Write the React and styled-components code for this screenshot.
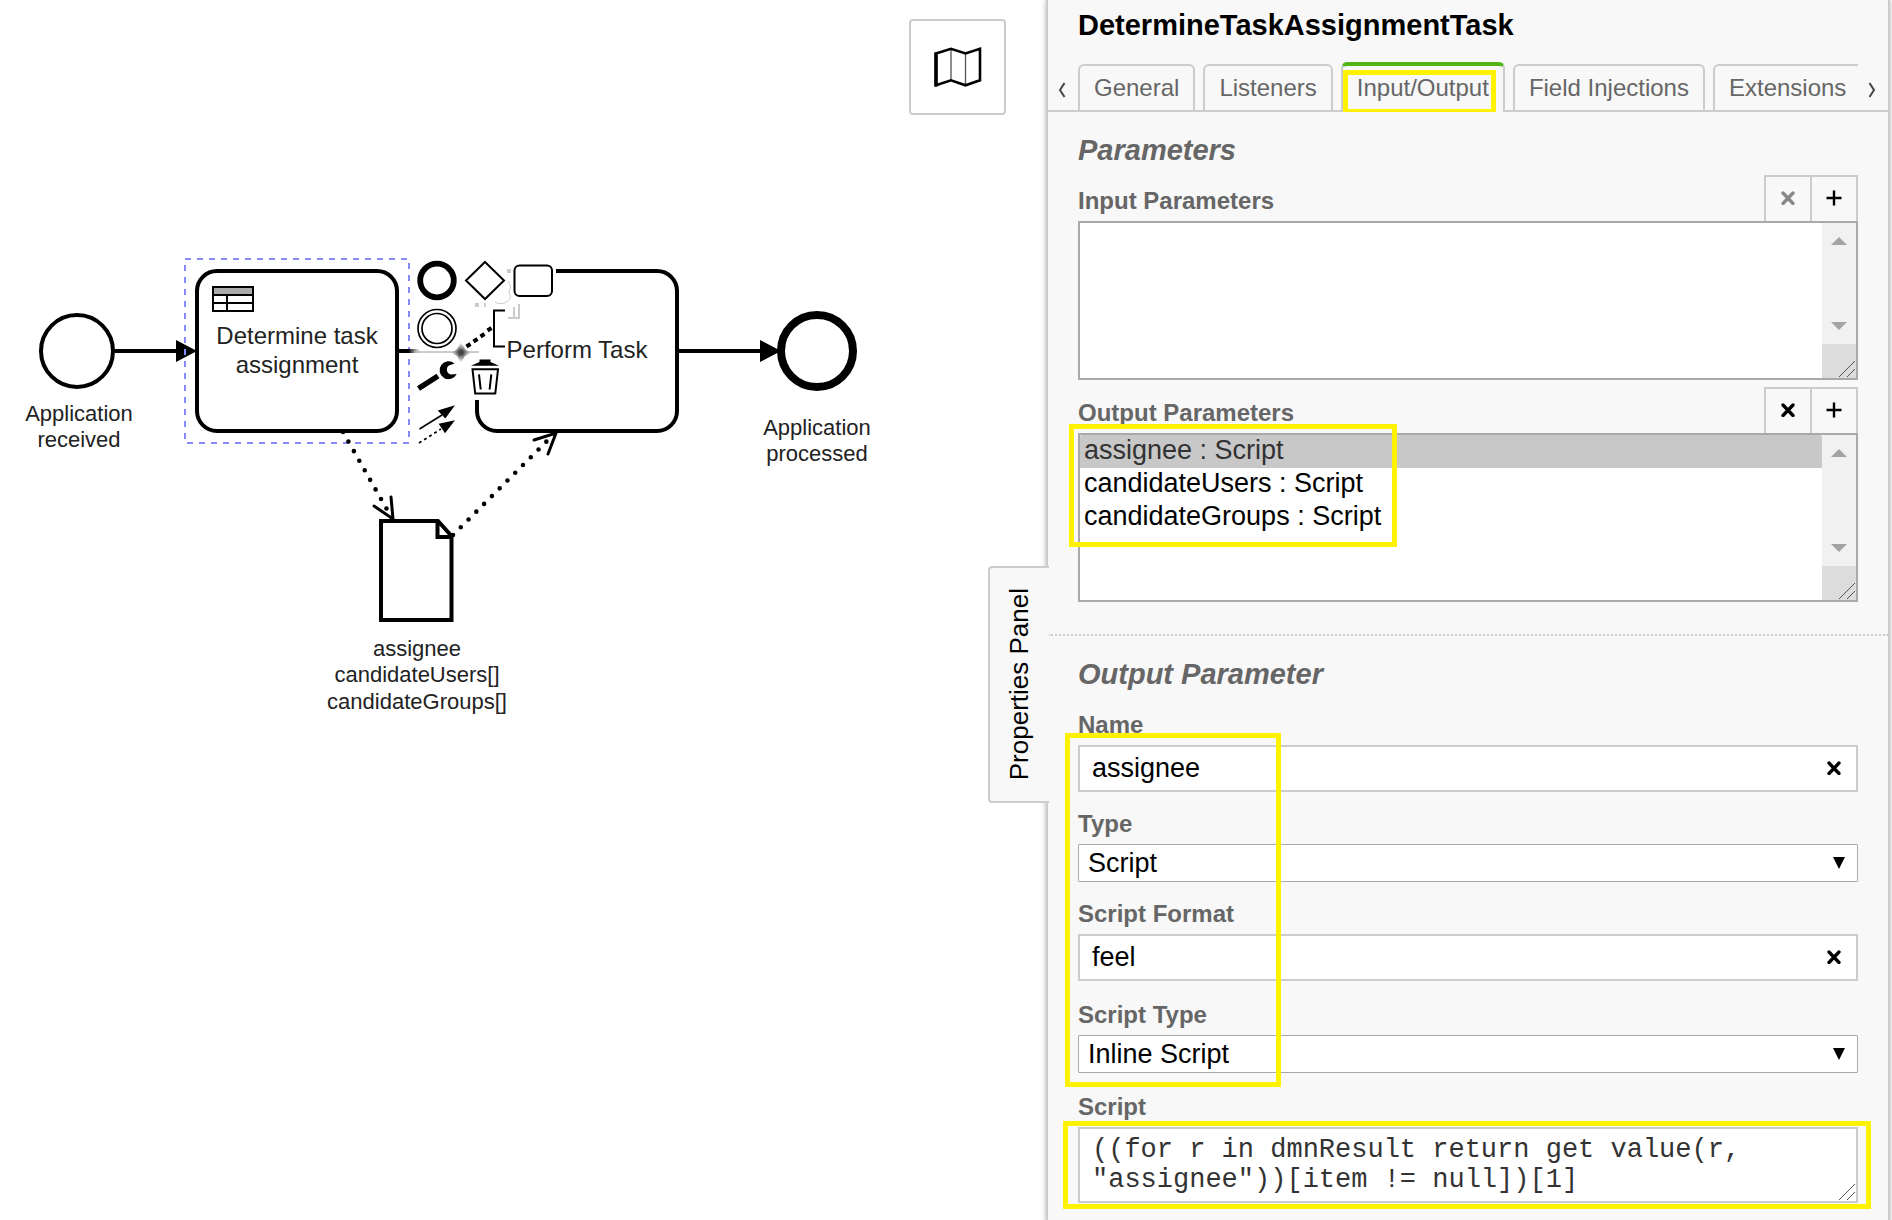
import React, { useState } from "react";
import styled, { createGlobalStyle, css } from "styled-components";

const GlobalStyle = createGlobalStyle`
  *, *::before, *::after { box-sizing: border-box; }
  body {
    margin: 0;
    background: #fff;
    color: #000;
    font-family: Arial, "Liberation Sans", sans-serif;
  }
  button, input, select, textarea { font-family: inherit; color: inherit; margin: 0; }
`;

const Modeler = styled.main`
  display: flex;
  min-height: 100vh;
  overflow: hidden;
`;

/* ---------- canvas ---------- */

const Canvas = styled.section`
  position: relative;
  flex: 1;
  min-width: 0;
`;

const Diagram = styled.svg`
  display: block;
  width: 100%;
  height: 760px;
  fill: none;
  stroke: #000;
  stroke-width: 4;

  text {
    fill: #222;
    stroke: none;
    text-anchor: middle;
    font-size: 24px;
  }
  .label { font-size: 22px; }
  .head { fill: #000; stroke: none; }
  .dots { stroke-width: 4.6; stroke-dasharray: 0 11; stroke-linecap: round; }
  .open-head { stroke-width: 3; stroke-linecap: round; }
  .outline { stroke: #88f; stroke-width: 2; stroke-dasharray: 6 6; }
  .ghost { stroke: #bbb; stroke-width: 1.5; }
  .faint { stroke: #ccc; stroke-width: 1; }
`;

const ContextPad = styled.div`
  position: absolute;
  left: 413px;
  top: 256px;
  display: flex;
  flex-direction: column;
`;

const PadRow = styled.div`
  display: flex;
`;

const PadButton = styled.button`
  width: 48px;
  height: 48px;
  padding: 0;
  border: 0;
  background: none;
  cursor: pointer;

  svg {
    display: block;
    fill: none;
    stroke: #000;
    stroke-width: 2;
  }
  .solid { fill: #000; stroke: none; }
`;

const MinimapToggle = styled.button`
  position: absolute;
  top: 19px;
  right: 40px;
  display: flex;
  align-items: center;
  justify-content: center;
  width: 97px;
  height: 96px;
  padding: 0;
  border: 2px solid #ccc;
  border-radius: 4px;
  background: #fff;
`;

/* ---------- properties panel ---------- */

const Panel = styled.aside`
  position: relative;
  flex: 0 0 844px;
  margin-right: 2px;
  padding-top: 8px;
  border: solid #ccc;
  border-width: 0 2px;
  background: #f8f8f8;
  box-shadow: 0 0 5px rgba(0, 0, 0, 0.3);
`;

const PanelToggle = styled.button`
  position: absolute;
  left: -60px;
  top: 566px;
  display: flex;
  align-items: center;
  justify-content: center;
  width: 61px;
  height: 237px;
  padding: 0 2px 0 0;
  border: 2px solid #ccc;
  border-right: 0;
  border-radius: 4px 0 0 4px;
  background: #f8f8f8;

  span {
    writing-mode: vertical-rl;
    transform: rotate(180deg);
    font-size: 26px;
    line-height: 30px;
  }
`;

const Title = styled.h1`
  margin: 0 30px 20px;
  font-size: 29px;
  line-height: 34px;
`;

const TabBar = styled.nav`
  display: flex;
  height: 50px;
  background: linear-gradient(#ccc, #ccc) bottom / 100% 2px no-repeat;
`;

const ScrollButton = styled.button`
  display: flex;
  align-items: center;
  justify-content: center;
  width: 30px;
  padding: 6px 3px 0 0;
  border: 0;
  background: none;
  color: #444;
`;

const TabList = styled.div`
  display: flex;
  flex: 1;
  gap: 8px;
  min-width: 0;
  overflow: hidden;
`;

const Tab = styled.button`
  position: relative;
  flex: none;
  margin: 2px 0;
  padding: 0 14px;
  border: 2px solid #ccc;
  border-bottom: 0;
  border-radius: 6px 6px 0 0;
  background: #f8f8f8;
  color: #666;
  font-size: 24px;

  ${(p) =>
    p.$active &&
    css`
      margin: 0;
      padding-bottom: 2px;
      border-top: 4px solid #52b415;
    `}
`;

const Group = styled.section`
  padding: 21px 30px 0;

  & + & {
    margin-top: 32px;
    border-top: 2px dotted #ccc;
  }
`;

const GroupTitle = styled.h2`
  margin: 0 0 ${(p) => p.$space}px;
  color: #666;
  font-size: 29px;
  font-style: italic;
  line-height: 34px;
`;

const Label = styled.label`
  display: block;
  padding-bottom: 6px;
  color: #666;
  font-size: 24px;
  font-weight: bold;
  line-height: 28px;
`;

const ListHeader = styled.div`
  display: flex;
  align-items: flex-end;
  justify-content: space-between;

  * + & { margin-top: 7px; }
  ${GroupTitle} + & { margin-top: 0; }
`;

const ListActions = styled.div`
  display: flex;
  border-right: 2px solid #ccc;
`;

const ListAction = styled.button`
  display: flex;
  align-items: center;
  justify-content: center;
  width: 46px;
  height: 46px;
  padding: 0 0 2px;
  border: solid #ccc;
  border-width: 2px 0 0 2px;
  background: #f8f8f8;
  color: #000;

  &:disabled { color: #888; }
`;

const ListBox = styled.div`
  position: relative;
  display: flex;
  height: ${(p) => p.$height}px;
  border: 2px solid #a9a9a9;
  background: #fff;
`;

const OptionList = styled.select`
  flex: 1;
  min-width: 0;
  padding: 0;
  border: 0;
  outline: 0;
  background: #fff;
  font-size: 27px;
  overflow: hidden;
  scrollbar-width: none;

  option {
    padding: 0 4px 2px;
    min-height: 33px;
  }
  option:checked {
    background: #c8c8c8;
    color: #323232;
  }
`;

const ScrollTrack = styled.div`
  display: flex;
  flex-direction: column;
  justify-content: space-between;
  width: 34px;
  background: #f1f1f1;
`;

const TrackArrows = styled.div`
  display: flex;
  flex: 1;
  flex-direction: column;
  align-items: center;
  justify-content: space-between;
  padding: 14px 0;

  svg { display: block; }
`;

const Corner = styled.div`
  display: flex;
  align-items: flex-end;
  justify-content: flex-end;
  height: 34px;
  background: #dcdcdc;
`;

const Fields = styled.div`
  position: relative;
  display: flex;
  flex-direction: column;
  gap: ${(p) => p.$gap}px;
  padding-bottom: 20px;
`;

const FieldBox = styled.div`
  position: relative;
  display: flex;
  align-items: center;
`;

const TextInput = styled.input`
  flex: 1;
  min-width: 0;
  height: 47px;
  padding: 0 50px 1px 12px;
  border: 2px solid #ccc;
  background: #fff;
  font-size: 27px;
`;

const ClearButton = styled.button`
  position: absolute;
  right: 12px;
  display: flex;
  align-items: center;
  justify-content: center;
  width: 24px;
  height: 28px;
  padding: 0 0 2px;
  border: 0;
  background: none;
`;

const Dropdown = styled.select`
  flex: 1;
  min-width: 0;
  height: 38px;
  padding: 0 40px 0 9px;
  border: 1px solid #a9a9a9;
  border-radius: 1px;
  appearance: none;
  background: #fff;
  font-size: 27px;
`;

const DropdownArrow = styled.svg`
  position: absolute;
  right: 13px;
  pointer-events: none;
`;

const ScriptArea = styled.textarea`
  display: block;
  flex: 1;
  min-width: 0;
  padding: 6px 12px;
  border: 2px solid #ccc;
  background: #fff;
  color: #333;
  font-family: "Courier New", "Liberation Mono", monospace;
  font-size: 27px;
  line-height: 30px;
  resize: none;
  overflow: hidden;
`;

const AreaGrip = styled.div`
  position: absolute;
  right: 2px;
  bottom: 2px;

  svg { display: block; }
`;

/* yellow marker drawn over the area it points out */
const Highlight = styled.div`
  position: absolute;
  z-index: 2;
  inset: ${(p) => p.$inset};
  width: ${(p) => p.$width || "auto"};
  height: ${(p) => p.$height || "auto"};
  border: 5px solid #fff200;
  pointer-events: none;
`;

/* ---------- icons ---------- */

const CrossIcon = () => (
  <svg width="14" height="14" viewBox="0 0 14 14" aria-hidden="true">
    <path d="M2 2l10 10.5M12 2L2 12.5" stroke="currentColor" strokeWidth="3.300" strokeLinecap="round" />
  </svg>
);

const PlusIcon = () => (
  <svg width="16" height="16" viewBox="0 0 16 16" aria-hidden="true">
    <path d="M8 0.5v15M0.5 8h15" stroke="currentColor" strokeWidth="2.400" />
  </svg>
);

const ChevronIcon = ({ right }) => (
  <svg width="8" height="16" viewBox="0 0 8 16" fill="none" stroke="currentColor" aria-hidden="true">
    <path d={right ? "M1.500 1L6 8l-4.500 7" : "M6.500 1L2 8l4.500 7"} strokeWidth="2" />
  </svg>
);

const Grip = () => (
  <svg width="18" height="18" viewBox="0 0 18 18" aria-hidden="true">
    <path d="M1 17L17 1M9 17l8-8" stroke="#555" strokeWidth="1" />
  </svg>
);

const TrackArrow = ({ down }) => (
  <svg width="16" height="8" viewBox="0 0 16 8" aria-hidden="true">
    <path d={down ? "M0 0h16L8 8z" : "M0 8h16L8 0z"} fill="#a3a3a3" />
  </svg>
);

const MapIcon = () => (
  <svg width="48" height="41" viewBox="0 0 48 41" fill="none" stroke="#000" aria-hidden="true">
    <path d="M17 3v30M31.500 7v30" stroke="#555" strokeWidth="1.3" />
    <path d="M2 6.500L17 1.800l14.500 4.700L46 1.800v31.500l-14.500 5L17 33.300l-15 5z" strokeWidth="2.600" />
    <path d="M2 5.500v34" strokeWidth="3.500" />
  </svg>
);

const padEntries = [
  [
    ["Append end event", <circle cx="24" cy="24.5" r="16.8" strokeWidth="5.800" />],
    ["Append gateway", <path d="M24 6l19 18.500-19 18.500L5 24.500z" />],
    ["Append task", <rect x="5.500" y="9.500" width="37.500" height="30.500" rx="5" />],
  ],
  [
    [
      "Append intermediate event",
      <>
        <circle cx="24" cy="24.500" r="19" strokeWidth="1.700" />
        <circle cx="24" cy="24.500" r="15" strokeWidth="1.700" />
      </>,
    ],
    [
      "Append text annotation",
      <>
        <path d="M44 6.500H33V42.500H44" />
        <path d="M5.500 42.500l4-2.500M12.500 37.500l4-2.500M19.500 32.500l4-2.500M26.500 26.500l4-2.500" strokeWidth="4" />
      </>,
    ],
  ],
  [
    [
      "Change type",
      <>
        <path d="M5.500 36.500L25 24" strokeWidth="5.500" />
        <path className="solid" d="M41.500 11.500A9 9 0 1 0 43.700 22L38 22.500A5 5 0 0 1 36 13.500Z" />
      </>,
    ],
    [
      "Remove",
      <>
        <path className="solid" d="M10 13.700l8.500-3.700V7.500h11V10l8.500 3.700z" />
        <path d="M11.500 17.300H37L34.300 41.500H14.200z" />
        <path d="M18 22.300l1.700 15.200M30.300 22.300l-1.700 15.200" />
      </>,
    ],
  ],
  [
    [
      "Connect",
      <>
        <path d="M6.500 29L29 15" strokeWidth="1.600" />
        <path className="solid" d="M42 5.300L24.700 10.500 32.300 18.500z" />
        <path d="M6 43l22-14" strokeWidth="1.700" strokeDasharray="3 3" />
        <path className="solid" d="M42 20.300L25.700 23.700 32 33.300z" />
      </>,
    ],
  ],
];

/* ---------- parts ---------- */

const ProcessDiagram = () => (
  <Diagram role="img" aria-label="Task assignment process">
    <circle cx="77" cy="351" r="36" />
    <text className="label" x="79" y="421">Application</text>
    <text className="label" x="79" y="447">received</text>

    <path d="M115 351H177" />
    <path className="head" d="M176 340l21 11-21 11z" />

    <rect x="197" y="271" width="200" height="160" rx="20" />
    <rect x="213" y="287" width="40" height="8" fill="#aaa" stroke="none" />
    <path d="M213 287h40v24h-40zM213 295h40M213 303h40M227 295v16" strokeWidth="2" />
    <text x="297" y="344">Determine task</text>
    <text x="297" y="373">assignment</text>
    <rect className="outline" x="185" y="259" width="224" height="184" />

    <defs>
      <linearGradient id="fade" gradientUnits="userSpaceOnUse" x1="408" y1="0" x2="420" y2="0">
        <stop offset="0" stopColor="#000" />
        <stop offset="1" stopColor="#000" stopOpacity="0" />
      </linearGradient>
      <radialGradient id="spot">
        <stop offset="0.2" stopColor="#444" />
        <stop offset="1" stopColor="#888" stopOpacity="0" />
      </radialGradient>
    </defs>
    <path d="M399 349h21v4h-21z" fill="url(#fade)" stroke="none" />
    <path className="ghost" d="M414 352H479" />
    <path d="M461 342l4 7 6 4-6 3-4 7-4-7-6-3 6-4z" fill="url(#spot)" stroke="none" />
    <path d="M507 269h4v4h-4zM475 303h4v4h-4zM484 303h2v4h-2z" fill="#ccc" stroke="none" />
    <path className="faint" d="M508 281q4 5 1 11 3 6-1 9-7 5-13 1" />
    <path className="ghost" d="M508 318h11V304M514 307v10" />

    <path d="M556 271H657a20 20 0 0 1 20 20V411a20 20 0 0 1-20 20H497a20 20 0 0 1-20-20V400" />
    <text x="577" y="358">Perform Task</text>

    <path d="M679 351H762" />
    <path className="head" d="M760 340l21 11-21 11z" />
    <circle cx="817" cy="351" r="36" strokeWidth="8" />
    <text className="label" x="817" y="435">Application</text>
    <text className="label" x="817" y="461">processed</text>

    <path className="dots" d="M343 432L389 513" />
    <path className="open-head" d="M374 506l19 13-2-22" />
    <path d="M381 521H438L451.500 536V620H381zM437.500 521V537H451" />
    <path className="dots" d="M453 535L552 436" />
    <path className="open-head" d="M534 440l22-7-8 21" />
    <text className="label" x="417" y="656">assignee</text>
    <text className="label" x="417" y="682">candidateUsers[]</text>
    <text className="label" x="417" y="709">candidateGroups[]</text>
  </Diagram>
);

const ParameterList = ({ id, label, options, selected, height, marker }) => {
  const [value, setValue] = useState(selected);
  return (
    <>
      <ListHeader>
        <Label htmlFor={id}>{label}</Label>
        <ListActions>
          <ListAction aria-label="Remove parameter" disabled={!value}>
            <CrossIcon />
          </ListAction>
          <ListAction aria-label="Add parameter">
            <PlusIcon />
          </ListAction>
        </ListActions>
      </ListHeader>
      <ListBox $height={height}>
        <OptionList id={id} size={4} value={value} onChange={(e) => setValue(e.target.value)}>
          {options.map((name) => (
            <option key={name} value={name}>{`${name} : Script`}</option>
          ))}
        </OptionList>
        <ScrollTrack aria-hidden="true">
          <TrackArrows>
            <TrackArrow />
            <TrackArrow down />
          </TrackArrows>
          <Corner>
            <Grip />
          </Corner>
        </ScrollTrack>
        {marker}
      </ListBox>
    </>
  );
};

const TextField = ({ id, label, initial }) => {
  const [value, setValue] = useState(initial);
  return (
    <div>
      <Label htmlFor={id}>{label}</Label>
      <FieldBox>
        <TextInput id={id} value={value} onChange={(e) => setValue(e.target.value)} />
        <ClearButton aria-label={`Clear ${label}`} onClick={() => setValue("")}>
          <CrossIcon />
        </ClearButton>
      </FieldBox>
    </div>
  );
};

const SelectField = ({ id, label, options }) => (
  <div>
    <Label htmlFor={id}>{label}</Label>
    <FieldBox>
      <Dropdown id={id}>
        {options.map((option) => (
          <option key={option}>{option}</option>
        ))}
      </Dropdown>
      <DropdownArrow width="12" height="12" viewBox="0 0 12 12" aria-hidden="true">
        <path d="M0 0h12L6 12z" />
      </DropdownArrow>
    </FieldBox>
  </div>
);

const tabs = ["General", "Listeners", "Input/Output", "Field Injections", "Extensions"];

export default function App() {
  return (
    <Modeler>
      <GlobalStyle />
      <Canvas>
        <ProcessDiagram />
        <ContextPad>
          {padEntries.map((row, i) => (
            <PadRow key={i}>
              {row.map(([name, icon]) => (
                <PadButton key={name} aria-label={name}>
                  <svg width="48" height="48" viewBox="0 0 48 48" aria-hidden="true">
                    {icon}
                  </svg>
                </PadButton>
              ))}
            </PadRow>
          ))}
        </ContextPad>
        <MinimapToggle aria-label="Toggle minimap">
          <MapIcon />
        </MinimapToggle>
      </Canvas>

      <Panel>
        <PanelToggle>
          <span>Properties Panel</span>
        </PanelToggle>
        <Title>DetermineTaskAssignmentTask</Title>
        <TabBar>
          <ScrollButton aria-label="Previous tabs">
            <ChevronIcon />
          </ScrollButton>
          <TabList role="tablist">
            {tabs.map((tab) => {
              const active = tab === "Input/Output";
              return (
                <Tab key={tab} role="tab" aria-selected={active} $active={active}>
                  {tab}
                  {active && <Highlight $inset="4px 7px auto 0" $height="44px" />}
                </Tab>
              );
            })}
          </TabList>
          <ScrollButton aria-label="Next tabs">
            <ChevronIcon right />
          </ScrollButton>
        </TabBar>

        <Group>
          <GroupTitle $space={8}>Parameters</GroupTitle>
          <ParameterList id="inputs" label="Input Parameters" options={[]} selected="" height={159} />
          <ParameterList
            id="outputs"
            label="Output Parameters"
            options={["assignee", "candidateUsers", "candidateGroups"]}
            selected="assignee"
            height={169}
            marker={<Highlight $inset="-11px auto auto -11px" $width="328px" $height="123px" />}
          />
        </Group>

        <Group>
          <GroupTitle $space={20}>Output Parameter</GroupTitle>
          <Fields $gap={18}>
            <TextField id="name" label="Name" initial="assignee" />
            <SelectField id="type" label="Type" options={["Script", "Text", "List", "Map"]} />
            <TextField id="format" label="Script Format" initial="feel" />
            <Highlight $inset="22px auto auto -13px" $width="216px" $height="354px" />
          </Fields>
          <Fields $gap={20}>
            <SelectField id="script-type" label="Script Type" options={["Inline Script", "External Resource"]} />
            <div>
              <Label htmlFor="script">Script</Label>
              <FieldBox>
                <ScriptArea
                  id="script"
                  rows={2}
                  spellCheck={false}
                  defaultValue={'((for r in dmnResult return get value(r, "assignee"))[item != null])[1]'}
                />
                <AreaGrip>
                  <Grip />
                </AreaGrip>
                <Highlight $inset="-6px -13px -6px -15px" />
              </FieldBox>
            </div>
          </Fields>
        </Group>
      </Panel>
    </Modeler>
  );
}
